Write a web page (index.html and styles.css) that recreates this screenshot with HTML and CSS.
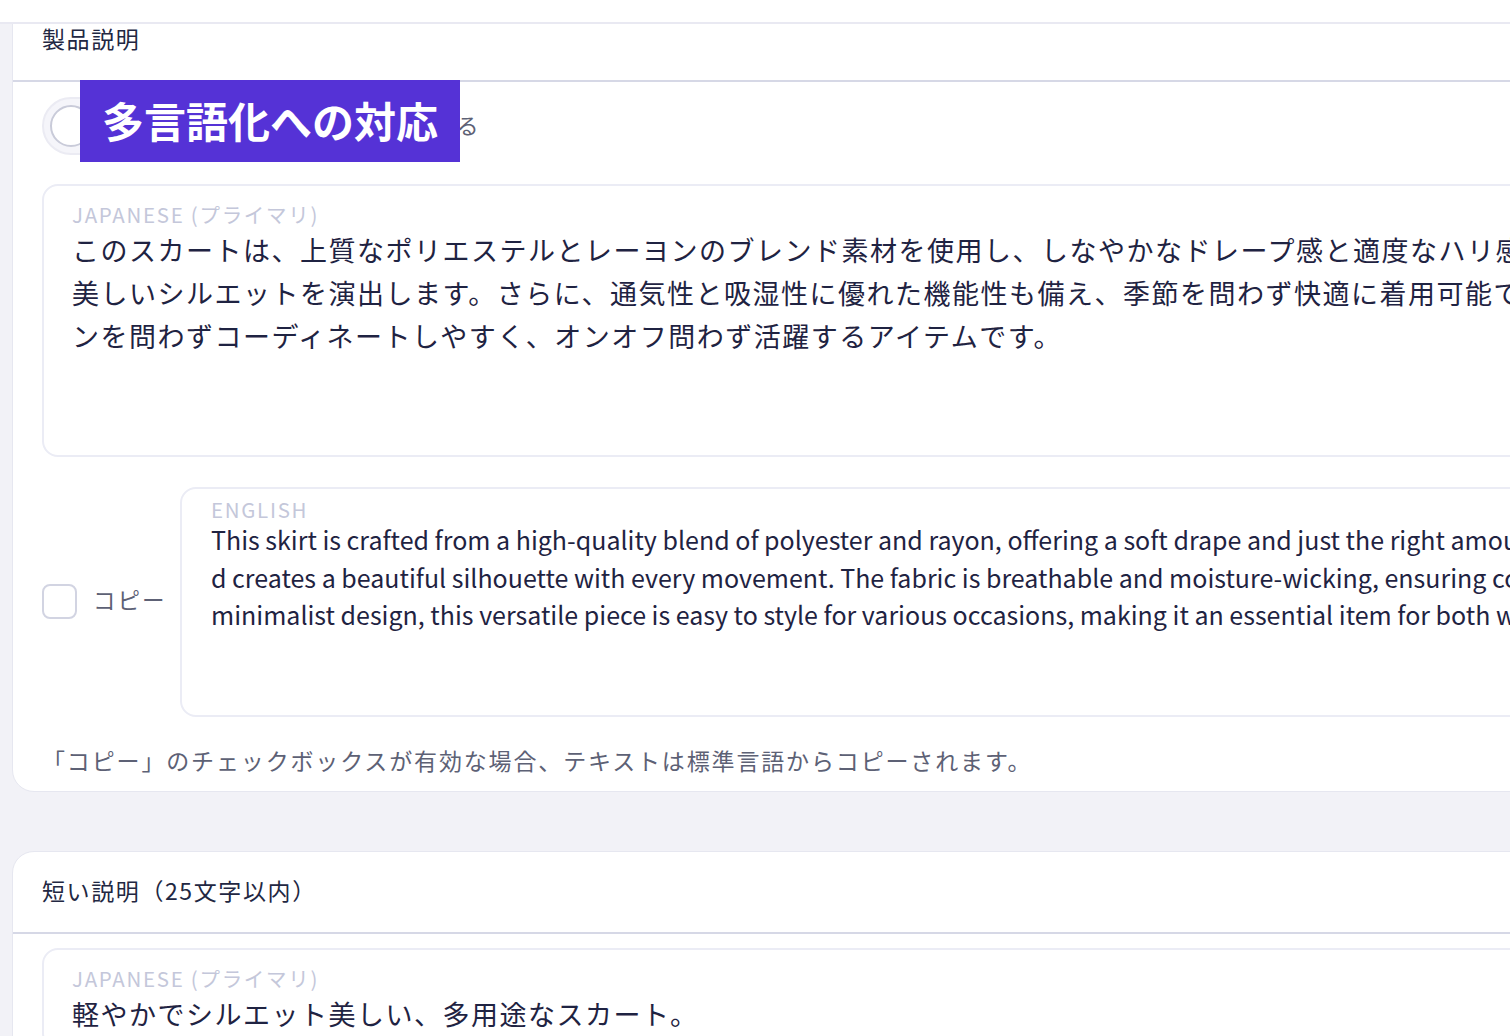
FILE: index.html
```html
<!DOCTYPE html>
<html lang="ja">
<head>
<meta charset="utf-8">
<title>製品説明</title>
<link rel="stylesheet" href="styles.css">
</head>
<body>
<div class="topbar"></div>
<div class="banner">多言語化への対応</div>
<main class="page">
  <section class="card">
    <header class="card-head">製品説明</header>
    <div class="card-body">
      <div class="toggle-row">
        <span class="toggle"><span class="knob"></span></span>
        <span class="toggle-label">すべての言語に自動で翻訳する</span>
      </div>
      <div class="lang-box primary">
        <div class="lang-label">JAPANESE (プライマリ)</div>
        <div class="lang-text ja">
          <span class="line">このスカートは、上質なポリエステルとレーヨンのブレンド素材を使用し、しなやかなドレープ感と適度なハリ感を兼ね備え、動くたびに</span>
          <span class="line">美しいシルエットを演出します。さらに、通気性と吸湿性に優れた機能性も備え、季節を問わず快適に着用可能です。シンプルなデザインで、シー</span>
          <span class="line">ンを問わずコーディネートしやすく、オンオフ問わず活躍するアイテムです。</span>
        </div>
      </div>
      <div class="lang-row">
        <label class="copy"><span class="checkbox"></span><span class="copy-text">コピー</span></label>
        <div class="lang-box secondary">
          <div class="lang-label">ENGLISH</div>
          <div class="lang-text en">
            <span class="line">This skirt is crafted from a high-quality blend of polyester and rayon, offering a soft drape and just the right amount of structure. Its flattering cut an</span>
            <span class="line">d creates a beautiful silhouette with every movement. The fabric is breathable and moisture-wicking, ensuring comfort in any season. With its</span>
            <span class="line">minimalist design, this versatile piece is easy to style for various occasions, making it an essential item for both work and leisure.</span>
          </div>
        </div>
      </div>
      <p class="note">「コピー」のチェックボックスが有効な場合、テキストは標準言語からコピーされます。</p>
    </div>
  </section>

  <section class="card second">
    <header class="card-head">短い説明（25文字以内）</header>
    <div class="card-body">
      <div class="lang-box primary">
        <div class="lang-label">JAPANESE (プライマリ)</div>
        <div class="lang-text ja">
          <span class="line">軽やかでシルエット美しい、多用途なスカート。</span>
        </div>
      </div>
    </div>
  </section>
</main>
</body>
</html>
```

FILE: styles.css
```css
* { box-sizing: border-box; }

html, body {
  margin: 0;
  padding: 0;
  height: 100%;
  overflow: hidden;
}

body {
  background: #f2f2f7;
  font-family: "Noto Sans CJK JP", "Noto Sans", sans-serif;
  color: #232846;
}

.topbar {
  position: fixed;
  top: 0;
  left: 0;
  right: 0;
  height: 24px;
  background: #ffffff;
  border-bottom: 2px solid #e9e9f2;
  z-index: 5;
}

.banner {
  position: absolute;
  left: 80px;
  top: 80px;
  height: 82px;
  padding: 0 22px;
  background: #5532d6;
  color: #ffffff;
  font-size: 42px;
  font-weight: 700;
  line-height: 80px;
  white-space: nowrap;
  z-index: 10;
}

.page {
  margin-top: -1px;
  padding-left: 12px;
  margin-right: -60px;
}

.card {
  background: #ffffff;
  border: 1px solid #e6e7f0;
  border-radius: 22px;
  overflow: hidden;
}

.card.second {
  margin-top: 59px;
}

.card-head {
  padding: 22px 29px 26px;
  font-size: 23px;
  line-height: 32px;
  letter-spacing: 1.6px;
  color: #222742;
  border-bottom: 2px solid #d6d8e6;
  white-space: nowrap;
}

.card-body {
  padding: 15px 0 15px 29px;
}

.card.second .card-body {
  padding-top: 14px;
}

.toggle-row {
  display: flex;
  align-items: center;
  gap: 10px;
  height: 58px;
  margin-bottom: 29px;
}

.toggle {
  display: flex;
  align-items: center;
  width: 100px;
  height: 58px;
  padding: 0 6px;
  border-radius: 29px;
  background: #f5f5fa;
  border: 2px solid #ebebf3;
}

.knob {
  width: 42px;
  height: 42px;
  border-radius: 50%;
  background: #ffffff;
  border: 2px solid #c9cbd9;
}

.toggle-label {
  font-size: 22px;
  letter-spacing: 1.6px;
  padding-bottom: 4px;
  color: #5d6175;
  white-space: nowrap;
}

.lang-box {
  border: 2px solid #ebecf5;
  border-radius: 16px;
  overflow: hidden;
  flex: 1;
}

.lang-box.primary {
  padding: 14px 0 12px 28px;
}

.lang-box.secondary {
  padding: 8px 0 6px 29px;
}

.lang-label {
  font-size: 20.5px;
  line-height: 28px;
  letter-spacing: 1.7px;
  color: #c4c7da;
  white-space: nowrap;
}

.secondary .lang-label {
  line-height: 24px;
}

.lang-text {
  white-space: nowrap;
  color: #1f2342;
}

.lang-text .line {
  display: block;
}

.lang-text.ja {
  font-size: 27px;
  line-height: 43px;
  letter-spacing: 1.5px;
  min-height: 215px;
}

.card.second .lang-text.ja {
  min-height: 43px;
}

.lang-text.en {
  font-size: 25px;
  line-height: 37.5px;
  letter-spacing: 0;
  min-height: 187.5px;
}

.lang-row {
  display: flex;
  align-items: center;
  gap: 15px;
  margin-top: 30px;
}

.copy {
  display: flex;
  align-items: center;
  gap: 16px;
  width: 123px;
  flex: none;
}

.checkbox {
  width: 35px;
  height: 35px;
  border: 2px solid #d2d4e2;
  border-radius: 8px;
  background: #ffffff;
  flex: none;
}

.copy-text {
  font-size: 22.5px;
  letter-spacing: 2px;
  padding-bottom: 6px;
  color: #5d6175;
  white-space: nowrap;
}

.note {
  margin: 27px 0 0;
  font-size: 23px;
  line-height: 32px;
  letter-spacing: 1.85px;
  color: #5d6175;
  white-space: nowrap;
}
```
